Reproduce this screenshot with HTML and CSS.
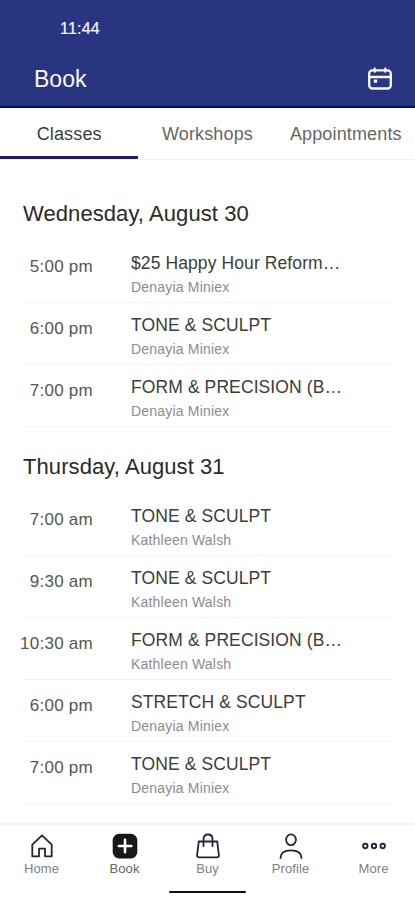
FILE: index.html
```html
<!DOCTYPE html>
<html lang="en">
<head>
<meta charset="utf-8">
<title>Book</title>
<link rel="stylesheet" href="styles.css">
</head>
<body>
<div class="app">
  <header class="header">
    <div class="status">11:44</div>
    <div class="titlebar">
      <h1 class="title">Book</h1>
      <svg class="calendar" width="26" height="24" viewBox="0 0 26 24" fill="none" stroke="currentColor" stroke-width="2.3" stroke-linecap="round" stroke-linejoin="round">
        <rect x="2.2" y="3.3" width="21.6" height="18.2" rx="3.2"/>
        <path d="M7.7 1.7v3M18.3 1.7v3M2.5 10h21"/>
        <rect x="6.8" y="12.5" width="3.4" height="3.2" rx=".6" fill="currentColor" stroke="none"/>
      </svg>
    </div>
  </header>
  <nav class="tabs">
    <div class="tab tab-active">Classes</div>
    <div class="tab">Workshops</div>
    <div class="tab">Appointments</div>
  </nav>
  <main class="schedule">
    <section class="day">
      <h2 class="date">Wednesday, August 30</h2>
      <div class="row"><div class="time">5:00 pm</div><div class="info"><div class="name">$25 Happy Hour Reform…</div><div class="teacher">Denayia Miniex</div></div></div>
      <div class="row"><div class="time">6:00 pm</div><div class="info"><div class="name">TONE &amp; SCULPT</div><div class="teacher">Denayia Miniex</div></div></div>
      <div class="row"><div class="time">7:00 pm</div><div class="info"><div class="name">FORM &amp; PRECISION (B…</div><div class="teacher">Denayia Miniex</div></div></div>
    </section>
    <section class="day">
      <h2 class="date">Thursday, August 31</h2>
      <div class="row"><div class="time">7:00 am</div><div class="info"><div class="name">TONE &amp; SCULPT</div><div class="teacher">Kathleen Walsh</div></div></div>
      <div class="row"><div class="time">9:30 am</div><div class="info"><div class="name">TONE &amp; SCULPT</div><div class="teacher">Kathleen Walsh</div></div></div>
      <div class="row"><div class="time">10:30 am</div><div class="info"><div class="name">FORM &amp; PRECISION (B…</div><div class="teacher">Kathleen Walsh</div></div></div>
      <div class="row"><div class="time">6:00 pm</div><div class="info"><div class="name">STRETCH &amp; SCULPT</div><div class="teacher">Denayia Miniex</div></div></div>
      <div class="row"><div class="time">7:00 pm</div><div class="info"><div class="name">TONE &amp; SCULPT</div><div class="teacher">Denayia Miniex</div></div></div>
    </section>
  </main>
  <footer class="footer">
    <nav class="bottom-nav">
      <div class="item">
        <svg class="icon" width="28" height="28" viewBox="0 0 28 28"><path d="M4.300 12.600 14 3.300l9.700 9.300v11.700h-6.700v-7.600h-6v7.600H4.300z"/></svg>
        <span>Home</span>
      </div>
      <div class="item">
        <svg class="icon" width="28" height="28" viewBox="0 0 28 28"><rect class="solid" x="1.700" y="1.800" width="24.600" height="24.600" rx="6.500"/><path class="plus" d="M14 7.800v12.500M7.800 14h12.500"/></svg>
        <span class="current">Book</span>
      </div>
      <div class="item">
        <svg class="icon" width="28" height="28" viewBox="0 0 28 28"><path d="M4.800 9.500h18.400l1.700 13.400q.2 2.400-2 2.400H5.100q-2.200 0-2-2.400zM9.500 14V7Q9.500 2.500 14 2.500t4.500 4.500V14"/></svg>
        <span>Buy</span>
      </div>
      <div class="item">
        <svg class="icon" width="28" height="28" viewBox="0 0 28 28"><ellipse cx="14" cy="7.800" rx="4.900" ry="5.400"/><path d="M3.500 26c0-5 4.200-7.700 10.500-7.700s10.500 2.700 10.500 7.700"/></svg>
        <span>Profile</span>
      </div>
      <div class="item">
        <svg class="icon" width="28" height="28" viewBox="0 0 28 28"><g class="dots"><circle cx="5.300" cy="14" r="2.200"/><circle cx="14" cy="14" r="2.200"/><circle cx="22.700" cy="14" r="2.200"/></g></svg>
        <span>More</span>
      </div>
    </nav>
    <div class="home-bar"></div>
  </footer>
</div>
</body>
</html>
```
FILE: styles.css
```css
* { box-sizing: border-box; }
body {
  margin: 0;
  background: #fff;
  font-family: "Liberation Sans", Arial, sans-serif;
  color: #333;
}
.app {
  width: 415px;
  height: 900px;
  display: flex;
  flex-direction: column;
  overflow: hidden;
}
.header {
  flex: none;
  height: 108px;
  background: #2a3582;
  border-bottom: 2px solid #08076b;
  color: #f8f8ff;
}
.status {
  padding: 19px 0 0 60px;
  font-size: 16px;
  line-height: 20px;
  letter-spacing: .2px;
  -webkit-text-stroke: .2px currentColor;
}
.titlebar {
  display: flex;
  justify-content: space-between;
  align-items: center;
  padding: 0 22px 0 34px;
  margin-top: 24px;
  height: 32px;
}
.title {
  margin: 0;
  font-size: 23px;
  font-weight: 400;
  line-height: 32px;
}
.calendar { display: block; }
.tabs {
  flex: none;
  display: grid;
  grid-template-columns: repeat(3, 1fr);
  height: 52px;
  border-bottom: 1px solid #f4f4f4;
}
.tab {
  height: 51px;
  line-height: 52px;
  text-align: center;
  font-size: 18px;
  letter-spacing: .15px;
  color: #666;
}
.tab-active {
  color: #3c3c3c;
  border-bottom: 3px solid #1f1a72;
}
.schedule {
  flex: 1;
  min-height: 0;
  padding: 40px 23px 0;
}
.day { margin-bottom: 26px; }
.date {
  margin: 0 0 12px;
  font-size: 22px;
  line-height: 28px;
  letter-spacing: .08px;
  font-weight: 400;
  color: #2a2a2a;
}
.row {
  display: flex;
  height: 62px;
  border-bottom: 1px solid #f4f4f4;
}
.date + .row { height: 63px; padding-top: 1px; }
.time {
  width: 75px;
  margin-left: -5px;
  padding-top: 16px;
  text-align: right;
  white-space: nowrap;
  font-size: 17px;
  line-height: 20px;
  letter-spacing: .25px;
  color: #555;
}
.info { margin-left: 38px; padding-top: 11px; }
.name {
  font-size: 17.500px;
  line-height: 22px;
  letter-spacing: .1px;
  white-space: nowrap;
  color: #3c3c3c;
}
.teacher {
  margin-top: 4px;
  font-size: 14px;
  line-height: 18px;
  letter-spacing: .2px;
  color: #8c8c8c;
}
.footer {
  flex: none;
  height: 77px;
  border-top: 2px solid #f7f7f7;
}
.bottom-nav {
  display: grid;
  grid-template-columns: repeat(5, 1fr);
  padding-top: 7px;
}
.item {
  display: flex;
  flex-direction: column;
  align-items: center;
  gap: 1px;
  font-size: 13px;
  line-height: 16px;
  letter-spacing: .1px;
  color: #808080;
}
.current { color: #666; }
.icon {
  display: block;
  fill: none;
  stroke: #25253a;
  stroke-width: 1.800;
  stroke-linejoin: round;
  stroke-linecap: round;
}
.solid { fill: #17171c; stroke: none; }
.plus { stroke: #fff; stroke-width: 2.600; }
.dots { stroke-width: 1.900; }
.home-bar {
  width: 77px;
  height: 2px;
  margin: 14px auto 0;
  border-radius: 1px;
  background: #111;
}
```
